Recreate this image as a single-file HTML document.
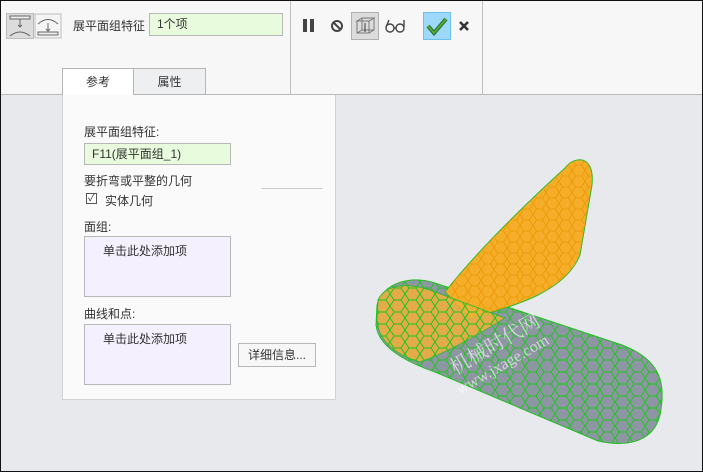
<!DOCTYPE html>
<html><head><meta charset="utf-8"><style>
*{margin:0;padding:0;box-sizing:border-box}
body{width:703px;height:472px;overflow:hidden;background:#e8e9ec;font-family:"Liberation Sans","Noto Sans CJK SC",sans-serif;font-size:12px;color:#333;position:relative}
.frame{position:absolute;left:0;top:0;width:703px;height:472px;border:1px solid #111;pointer-events:none;z-index:10}
.tb{position:absolute;left:0;top:0;width:703px;height:95px;background:#f7f7f7;border-bottom:1px solid #b9b9b9}
.vl{position:absolute;top:0;width:1px;height:95px;background:#c0c0c0}
.abs{position:absolute}
.inp{position:absolute;background:#e8fbdc;border:1px solid #b8b8b8;padding-left:7px}
.box{position:absolute;background:#f4f0fe;border:1px solid #b8b8b8;padding:5px 0 0 18px}
</style></head><body>
<div class="tb">
 <div class="abs" style="left:6px;top:13px;width:28px;height:26px;background:#dcdcdc;border:1px solid #bcbcbc"></div>
 <svg class="abs" style="left:6px;top:13px" width="56" height="26" viewBox="0 0 56 26" fill="none" stroke="#666" stroke-width="1">
  <rect x="4" y="3" width="20" height="3" fill="#eee"/><path d="M14 6v8M12 12l2 2 2-2"/><path d="M4 23q10-8 20 0"/>
  <rect x="29" y="1" width="26" height="24" stroke="#bcbcbc" fill="#f5f5f5"/>
  <path d="M32 11q10-9 20 0" /><path d="M42 10v8M40 16l2 2 2-2"/><rect x="32" y="19" width="20" height="3" fill="#eee"/>
 </svg>
 <div class="abs" style="left:73px;top:17px;font-size:12px">展平面组特征</div>
 <div class="inp" style="left:149px;top:13px;width:134px;height:23px;line-height:21px;font-size:12px">1个项</div>
 <div class="vl" style="left:290px"></div>
 <div class="abs" style="left:303px;top:19px;width:4px;height:13px;background:#444"></div>
 <div class="abs" style="left:310px;top:19px;width:4px;height:13px;background:#444"></div>
 <svg class="abs" style="left:330px;top:19px" width="14" height="14"><circle cx="7" cy="7" r="5" fill="none" stroke="#444" stroke-width="2"/><path d="M3.5 3.5l7 7" stroke="#444" stroke-width="2"/></svg>
 <div class="abs" style="left:351px;top:12px;width:28px;height:28px;background:#dcdcdc;border:1px solid #b0b0b0"></div>
 <svg class="abs" style="left:355px;top:16px" width="22" height="20" fill="none" stroke="#777" stroke-width="1"><path d="M2 5l5-3h12l-5 3zM2 5v12h12V5M14 17l5-3V2M7 2v12l-5 3M7 14h12"/><path d="M10 7v9" stroke="#333"/></svg>
 <svg class="abs" style="left:384px;top:18px" width="22" height="16" fill="none" stroke="#444" stroke-width="1.4"><circle cx="6" cy="10" r="4"/><circle cx="16" cy="10" r="4"/><path d="M10 10h2M2 9l3-7M20 9V2"/></svg>
 <div class="abs" style="left:423px;top:12px;width:28px;height:28px;background:#9ed9fb;border:1px solid #6cc0f0"></div>
 <svg class="abs" style="left:425px;top:16px" width="24" height="20"><path d="M3 10l6 7L21 3" fill="none" stroke="#1e6f2f" stroke-width="4"/><path d="M3 10l6 7L21 3" fill="none" stroke="#5aa83b" stroke-width="2"/></svg>
 <svg class="abs" style="left:458px;top:20px" width="12" height="12"><path d="M2 2l8 8M10 2l-8 8" stroke="#333" stroke-width="2.6"/></svg>
 <div class="vl" style="left:482px"></div>
 <div class="abs" style="left:62px;top:68px;width:72px;height:28px;background:#fff;border:1px solid #b5b5b5;border-bottom:none;text-align:center;line-height:26px">参考</div>
 <div class="abs" style="left:134px;top:68px;width:72px;height:27px;background:#eeeff1;border:1px solid #b5b5b5;border-left:none;text-align:center;line-height:26px">属性</div>
</div>
<div class="abs" style="left:62px;top:95px;width:274px;height:305px;background:#fafafa;border:1px solid #d2d2d2;border-top:none">
 <div class="abs" style="left:21px;top:28px">展平面组特征:</div>
 <div class="inp" style="left:21px;top:48px;width:147px;height:22px;line-height:20px">F11(展平面组_1)</div>
 <div class="abs" style="left:21px;top:77px">要折弯或平整的几何</div>
 <div class="abs" style="left:198px;top:93px;width:62px;height:1px;background:#ccc"></div>
 <div class="abs" style="left:23px;top:98px;width:11px;height:11px;border:1px solid #555;background:#fff;font-size:10px;line-height:9px;text-align:center">✓</div>
 <div class="abs" style="left:42px;top:97px">实体几何</div>
 <div class="abs" style="left:21px;top:123px">面组:</div>
 <div class="box" style="left:21px;top:141px;width:147px;height:61px">单击此处添加项</div>
 <div class="abs" style="left:21px;top:210px">曲线和点:</div>
 <div class="box" style="left:21px;top:229px;width:147px;height:61px">单击此处添加项</div>
 <div class="abs" style="left:175px;top:248px;width:78px;height:24px;border:1px solid #b8b8b8;background:#f7f7f7;text-align:center;line-height:22px">详细信息...</div>
</div>
<svg class="abs" style="left:0;top:0" width="703" height="472">
 <defs><pattern id="hx" width="15" height="12" patternUnits="userSpaceOnUse"><path d="M4 0h7l4 6-4 6H4L0 6z" fill="none" stroke="#1fc41f" stroke-width="1"/></pattern>
 <pattern id="ho" width="13" height="11" patternUnits="userSpaceOnUse"><path d="M3.5 0h6l3.5 5.5-3.5 5.5h-6L0 5.5z" fill="none" stroke="#e89a00" stroke-width="0.8"/></pattern></defs>
 <path d="M377 305C383 283 410 275 435 283L622 345C662 360 666 385 660 415C654 440 630 448 598 441L435 372C400 360 378 345 376 325Z" fill="#8f96a3"/>
 <path d="M377 305C383 283 410 275 435 283L622 345C662 360 666 385 660 415C654 440 630 448 598 441L435 372C400 360 378 345 376 325Z" fill="url(#hx)" stroke="#22c022"/>
 <path d="M565 168C575 155 595 155 592 185L580 255C566 290 520 305 470 318L445 292C478 250 530 200 565 168Z" fill="#f6ad2a" stroke="#2cba2a"/>
 <path d="M565 168C575 155 595 155 592 185L580 255C566 290 520 305 470 318L445 292C478 250 530 200 565 168Z" fill="url(#ho)"/>
 <path d="M378 300C385 285 405 282 430 290L505 318C470 340 440 355 420 362C395 355 378 340 377 320Z" fill="#f2b13a" opacity="0.85" stroke="#2cba2a"/>
 <path d="M378 300C385 285 405 282 430 290L505 318C470 340 440 355 420 362C395 355 378 340 377 320Z" fill="url(#hx)"/>
 <text x="455" y="375" transform="rotate(-30 455 375)" font-size="20" fill="#fff" opacity="0.6" font-family="Liberation Serif,Noto Serif CJK SC,serif">机械时代网</text>
 <text x="460" y="395" transform="rotate(-30 460 395)" font-size="16" fill="#fff" opacity="0.6" font-family="Liberation Serif,serif">www.jxage.com</text>
</svg>
<div class="frame"></div>
</body></html>
